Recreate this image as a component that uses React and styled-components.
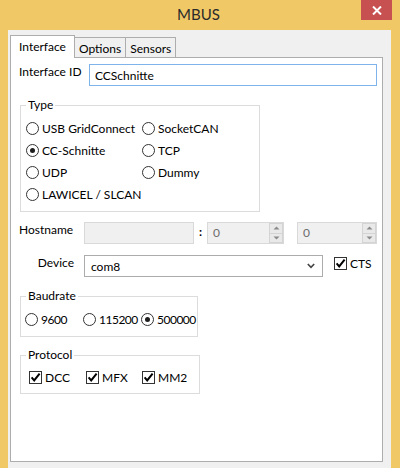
import React from 'react';
import styled, { createGlobalStyle } from 'styled-components';

const GlobalStyle = createGlobalStyle`
  html, body {
    margin: 0;
    padding: 0;
  }
  body {
    width: 400px;
    height: 468px;
    overflow: hidden;
    font-family: Lato, "Liberation Sans", sans-serif;
    font-size: 12px;
    color: #000;
  }
`;

const Window = styled.div`
  width: 400px;
  height: 468px;
  background: #f0c866;
  display: flex;
  flex-direction: column;
`;

const TitleBar = styled.div`
  height: 30px;
  flex-shrink: 0;
  display: grid;
  grid-template-columns: 1fr auto 1fr;
`;

const Title = styled.div`
  grid-column: 2;
  font-size: 15px;
  line-height: 29px;
  color: #2b2b2b;
  margin-right: 3px;
`;

const CloseButton = styled.div`
  justify-self: end;
  align-self: start;
  width: 31px;
  height: 20px;
  margin-right: 8px;
  background: #c75050;
  display: flex;
  align-items: center;
  justify-content: center;
`;

const Body = styled.div`
  flex: 1;
  min-height: 0;
  margin: 0 9px 0 8px;
  background: #f0f0f0;
  padding: 5px 8px 6px 2px;
  display: flex;
  flex-direction: column;
`;

const TabRow = styled.div`
  height: 22px;
  display: flex;
  align-items: flex-end;
  position: relative;
  z-index: 1;
`;

const Tab = styled.div`
  box-sizing: border-box;
  display: flex;
  align-items: center;
  border: 1px solid #adadad;
  border-bottom: none;
  height: ${p => (p.active ? '23px' : '20px')};
  margin-bottom: ${p => (p.active ? '-1px' : '0')};
  padding: ${p => (p.active ? '0 8px 1px 8px' : '2px 4px 0 4px')};
  background: ${p => (p.active ? '#fff' : '#f0f0f0')};
  & + & {
    margin-left: ${p => (p.active ? '0' : '-1px')};
  }
`;

const Panel = styled.div`
  flex: 1;
  background: #fff;
  border: 1px solid #adadad;
  padding: 6px 5px 0 8px;
  display: flex;
  flex-direction: column;
`;

const Row = styled.div`
  display: flex;
  align-items: flex-start;
  margin-top: ${p => p.mt || 0}px;
`;

const Label = styled.div`
  width: ${p => p.w}px;
  box-sizing: border-box;
  line-height: 16px;
  text-align: ${p => (p.right ? 'right' : 'left')};
  padding-right: ${p => (p.right ? '10px' : '0')};
  white-space: nowrap;
`;

const TextInput = styled.input`
  flex: 1;
  height: 22px;
  box-sizing: border-box;
  border: 1px solid #7eb4ea;
  background: #fff;
  padding: 0 5px;
  font: inherit;
  color: #000;
  outline: none;
`;

const DisabledBox = styled.div`
  width: ${p => p.w}px;
  height: 22px;
  box-sizing: border-box;
  border: 1px solid #d9d9d9;
  background: #f0f0f0;
`;

const Colon = styled.div`
  width: 13px;
  text-align: center;
  line-height: 20px;
  font-weight: bold;
`;

const Spin = styled.div`
  width: ${p => p.w}px;
  height: 22px;
  box-sizing: border-box;
  border: 1px solid #d9d9d9;
  background: #f0f0f0;
  margin-left: ${p => p.ml || 0}px;
  display: flex;
`;

const SpinValue = styled.span`
  flex: 1;
  padding-left: 5px;
  line-height: 20px;
  color: #6d6d6d;
`;

const SpinButtons = styled.div`
  width: 14px;
  display: flex;
  flex-direction: column;
`;

const SpinButton = styled.div`
  flex: 1;
  box-sizing: border-box;
  border: 1px solid #d4d4d4;
  border-top: ${p => (p.down ? 'none' : '1px solid #d4d4d4')};
  background: #e9e9e9;
  display: flex;
  align-items: center;
  justify-content: center;
`;

const Combo = styled.div`
  width: 239px;
  height: 22px;
  box-sizing: border-box;
  border: 1px solid #acacac;
  background: #fff;
  display: flex;
  align-items: center;
  justify-content: space-between;
  padding: 0 7px 0 6px;
`;

const Group = styled.fieldset`
  width: ${p => p.w}px;
  box-sizing: border-box;
  margin: ${p => p.mt}px 0 0 1px;
  padding: 0 0 ${p => p.pb}px 5px;
  border: 1px solid #dcdcdc;
  min-width: 0;
`;

const Legend = styled.legend`
  padding: 0 2px;
  line-height: 16px;
`;

const OptionGrid = styled.div`
  display: grid;
  grid-template-columns: ${p => p.cols};
  grid-auto-rows: 22px;
  margin: ${p => p.pt}px 0 0 ${p => p.ml || 0}px;
  letter-spacing: ${p => (p.tight ? '-0.5px' : 'normal')};
`;

const Option = styled.label`
  display: flex;
  align-items: center;
  gap: 3px;
  white-space: nowrap;
  margin-top: ${p => p.mt || 0}px;
  margin-left: ${p => p.ml || 0}px;
`;

const RadioCircle = styled.span`
  width: 13px;
  height: 13px;
  box-sizing: border-box;
  border: 1px solid #333;
  border-radius: 50%;
  background: #fff;
  flex-shrink: 0;
  display: flex;
  align-items: center;
  justify-content: center;
  &::after {
    content: '';
    width: 5px;
    height: 5px;
    border-radius: 50%;
    background: ${p => (p.checked ? '#1e1e1e' : 'transparent')};
  }
`;

const CheckSquare = styled.span`
  width: 13px;
  height: 13px;
  box-sizing: border-box;
  border: 1px solid #333;
  background: #fff;
  flex-shrink: 0;
  display: flex;
  align-items: center;
  justify-content: center;
`;

const Radio = ({ checked, children }) => (
  <Option>
    <RadioCircle checked={checked} />
    {children}
  </Option>
);

const Check = ({ children, mt, ml }) => (
  <Option mt={mt} ml={ml}>
    <CheckSquare>
      <svg width="11" height="11" viewBox="0 0 11 11">
        <path d="M1.6 5.4 L4.2 8.4 L9.6 1.6" fill="none" stroke="#000" strokeWidth="2" />
      </svg>
    </CheckSquare>
    {children}
  </Option>
);

const Arrow = ({ down }) => (
  <svg width="7" height="4" viewBox="0 0 7 4">
    <path d={down ? 'M0.5 0.5 L6.5 0.5 L3.5 3.5 Z' : 'M0.5 3.5 L6.5 3.5 L3.5 0.5 Z'} fill="#8a8a8a" />
  </svg>
);

const SpinBox = ({ w, ml }) => (
  <Spin w={w} ml={ml}>
    <SpinValue>0</SpinValue>
    <SpinButtons>
      <SpinButton>
        <Arrow />
      </SpinButton>
      <SpinButton down>
        <Arrow down />
      </SpinButton>
    </SpinButtons>
  </Spin>
);

const App = () => {
  return (
    <Window>
      <GlobalStyle />
      <TitleBar>
        <Title>MBUS</Title>
        <CloseButton>
          <svg width="10" height="9" viewBox="0 0 10 9">
            <path d="M1 0.5 L9 8.5 M9 0.5 L1 8.5" stroke="#fff" strokeWidth="2" />
          </svg>
        </CloseButton>
      </TitleBar>
      <Body>
        <TabRow>
          <Tab active>Interface</Tab>
          <Tab>Options</Tab>
          <Tab>Sensors</Tab>
        </TabRow>
        <Panel>
          <Row>
            <Label w={70}>Interface ID</Label>
            <TextInput defaultValue="CCSchnitte" />
          </Row>

          <Group w={240} mt={11} pb={6}>
            <Legend>Type</Legend>
            <OptionGrid cols="116px auto" pt={4}>
              <Radio>USB GridConnect</Radio>
              <Radio>SocketCAN</Radio>
              <Radio checked>CC-Schnitte</Radio>
              <Radio>TCP</Radio>
              <Radio>UDP</Radio>
              <Radio>Dummy</Radio>
              <Radio>LAWICEL / SLCAN</Radio>
            </OptionGrid>
          </Group>

          <Row mt={10}>
            <Label w={65}>Hostname</Label>
            <DisabledBox w={110} />
            <Colon>:</Colon>
            <SpinBox w={77} />
            <SpinBox w={80} ml={13} />
          </Row>

          <Row mt={11}>
            <Label w={65} right>Device</Label>
            <Combo>
              <span>com8</span>
              <svg width="8" height="6" viewBox="0 0 8 6">
                <path d="M0.8 1 L4 4.4 L7.2 1" fill="none" stroke="#444" strokeWidth="1.6" />
              </svg>
            </Combo>
            <Check mt={1} ml={11}>CTS</Check>
          </Row>

          <Group w={178} mt={11} pb={6}>
            <Legend>Baudrate</Legend>
            <OptionGrid cols="58px 58px auto" pt={4} ml={-1} tight>
              <Radio>9600</Radio>
              <Radio>115200</Radio>
              <Radio checked>500000</Radio>
            </OptionGrid>
          </Group>

          <Group w={180} mt={10} pb={5}>
            <Legend>Protocol</Legend>
            <OptionGrid cols="57px 56px auto" pt={3} ml={3}>
              <Check>DCC</Check>
              <Check>MFX</Check>
              <Check>MM2</Check>
            </OptionGrid>
          </Group>
        </Panel>
      </Body>
    </Window>
  );
};

export default App;
